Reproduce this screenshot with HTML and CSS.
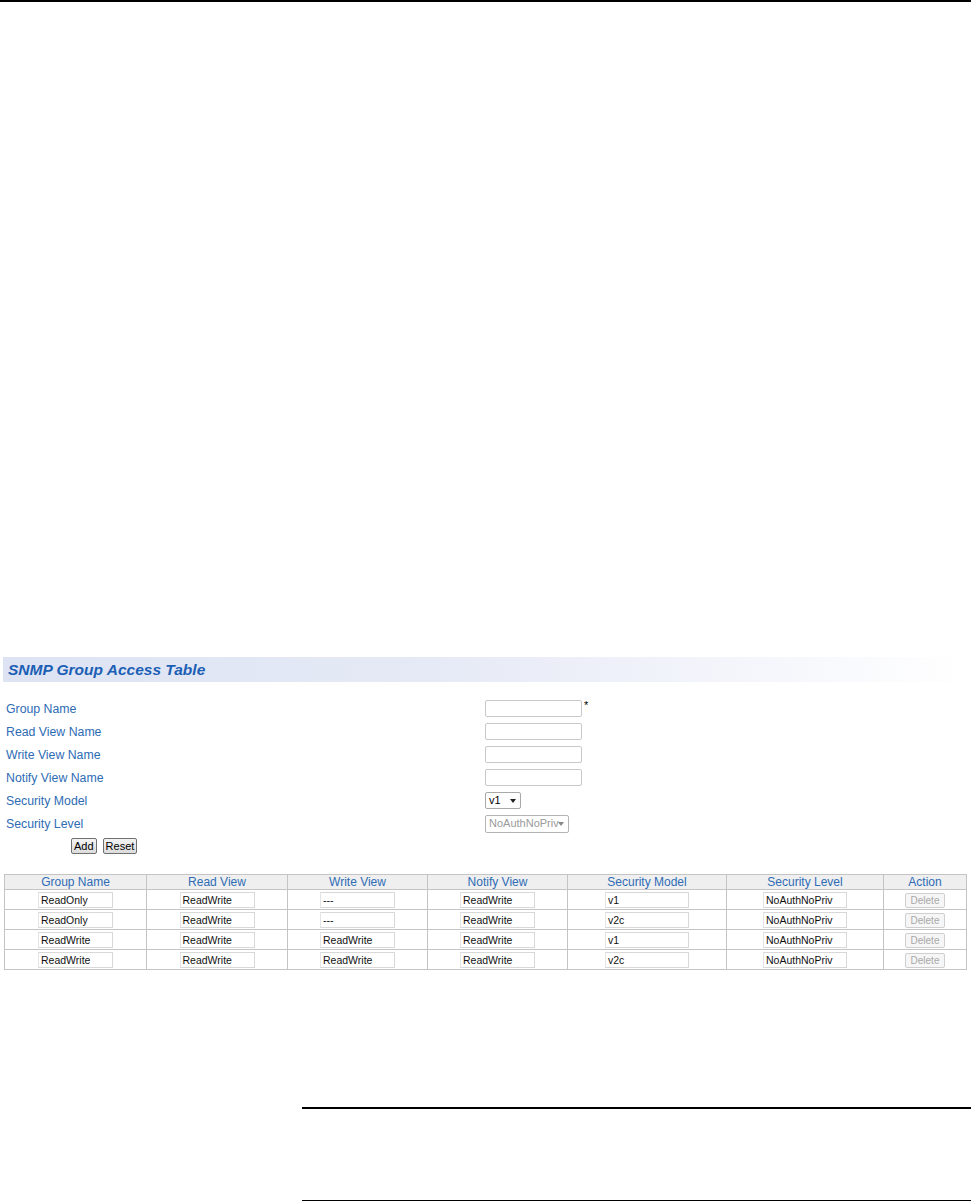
FILE: index.html
```html
<!DOCTYPE html>
<html lang="en">
<head>
    <meta charset="UTF-8">
    <title>SNMP Group Access Table</title>
    <link rel="stylesheet" href="styles.css">
</head>
<body>
    <div class="top-rule"></div>

    <div class="panel">
        <div class="panel-title">SNMP Group Access Table</div>

        <form class="entry-form">
            <div class="form-row">
                <label>Group Name</label>
                <div class="field"><input type="text" class="text-in"><span class="req">*</span></div>
            </div>
            <div class="form-row">
                <label>Read View Name</label>
                <div class="field"><input type="text" class="text-in"></div>
            </div>
            <div class="form-row">
                <label>Write View Name</label>
                <div class="field"><input type="text" class="text-in"></div>
            </div>
            <div class="form-row">
                <label>Notify View Name</label>
                <div class="field"><input type="text" class="text-in"></div>
            </div>
            <div class="form-row">
                <label>Security Model</label>
                <div class="field">
                    <div class="fake-select model-select">v1<span class="arrow"></span></div>
                </div>
            </div>
            <div class="form-row">
                <label>Security Level</label>
                <div class="field">
                    <div class="fake-select level-select disabled">NoAuthNoPriv<span class="arrow"></span></div>
                </div>
            </div>
            <div class="btn-row">
                <button type="button" class="btn">Add</button>
                <button type="button" class="btn">Reset</button>
            </div>
        </form>

        <table class="group-table">
            <thead>
                <tr>
                    <th class="c1">Group Name</th>
                    <th class="c2">Read View</th>
                    <th class="c3">Write View</th>
                    <th class="c4">Notify View</th>
                    <th class="c5">Security Model</th>
                    <th class="c6">Security Level</th>
                    <th class="c7">Action</th>
                </tr>
            </thead>
            <tbody>
                <tr>
                    <td><span class="cell-in">ReadOnly</span></td>
                    <td><span class="cell-in">ReadWrite</span></td>
                    <td><span class="cell-in dim">---</span></td>
                    <td><span class="cell-in">ReadWrite</span></td>
                    <td><span class="cell-in wide">v1</span></td>
                    <td><span class="cell-in wide">NoAuthNoPriv</span></td>
                    <td><span class="del-btn">Delete</span></td>
                </tr>
                <tr>
                    <td><span class="cell-in">ReadOnly</span></td>
                    <td><span class="cell-in">ReadWrite</span></td>
                    <td><span class="cell-in">---</span></td>
                    <td><span class="cell-in">ReadWrite</span></td>
                    <td><span class="cell-in wide">v2c</span></td>
                    <td><span class="cell-in wide">NoAuthNoPriv</span></td>
                    <td><span class="del-btn">Delete</span></td>
                </tr>
                <tr>
                    <td><span class="cell-in">ReadWrite</span></td>
                    <td><span class="cell-in">ReadWrite</span></td>
                    <td><span class="cell-in">ReadWrite</span></td>
                    <td><span class="cell-in">ReadWrite</span></td>
                    <td><span class="cell-in wide">v1</span></td>
                    <td><span class="cell-in wide">NoAuthNoPriv</span></td>
                    <td><span class="del-btn">Delete</span></td>
                </tr>
                <tr>
                    <td><span class="cell-in">ReadWrite</span></td>
                    <td><span class="cell-in">ReadWrite</span></td>
                    <td><span class="cell-in">ReadWrite</span></td>
                    <td><span class="cell-in">ReadWrite</span></td>
                    <td><span class="cell-in wide">v2c</span></td>
                    <td><span class="cell-in wide">NoAuthNoPriv</span></td>
                    <td><span class="del-btn">Delete</span></td>
                </tr>
            </tbody>
        </table>
    </div>

    <div class="note-box"></div>
</body>
</html>
```

FILE: styles.css
```css
body {
    margin: 0;
    padding: 0;
    background-color: #ffffff;
    font-family: "Liberation Sans", Arial, sans-serif;
    color: #000;
}
.top-rule {
    height: 2px;
    background-color: #000;
}
.panel {
    margin-top: 655px;
    padding-left: 3px;
}
.panel-title {
    height: 25px;
    line-height: 25px;
    padding-left: 5px;
    background: linear-gradient(to right, #dde3f3 0%, #e6eaf6 45%, #f6f7fc 80%, #ffffff 100%);
    color: #1c5fb4;
    font-size: 15.5px;
    font-weight: bold;
    font-style: italic;
}
.entry-form {
    padding: 15px 0 0 3px;
}
.form-row {
    display: flex;
    align-items: center;
    height: 23px;
}
.form-row label {
    width: 479px;
    font-size: 12.3px;
    color: #2e6cb5;
}
.field {
    display: flex;
    align-items: flex-start;
}
.text-in {
    width: 97px;
    height: 17px;
    box-sizing: border-box;
    border: 1px solid #c8c8c8;
    border-radius: 2px;
    margin: 0;
    padding: 0;
}
.req {
    font-size: 11px;
    line-height: 10px;
    margin-left: 2px;
}
.fake-select {
    position: relative;
    height: 17px;
    box-sizing: border-box;
    border: 1px solid #a9a9a9;
    border-radius: 2px;
    font-size: 11px;
    line-height: 15px;
    padding-left: 3px;
}
.model-select {
    width: 36px;
}
.level-select {
    width: 84px;
    height: 18px;
}
.fake-select.disabled {
    color: #9a9a9a;
    border-color: #b4b4b4;
}
.arrow {
    position: absolute;
    right: 4px;
    top: 6px;
    border-left: 3px solid transparent;
    border-right: 3px solid transparent;
    border-top: 4px solid #222;
}
.disabled .arrow {
    border-top-color: #888;
}
.btn-row {
    padding: 3px 0 0 65px;
    display: flex;
    gap: 6px;
}
.btn {
    font-family: "Liberation Sans", Arial, sans-serif;
    font-size: 11px;
    height: 16px;
    padding: 0 2px;
    margin: 0;
    border: 1px solid #707070;
    border-radius: 2px;
    background: linear-gradient(#f4f4f4, #dcdcdc);
    line-height: 13px;
}
.group-table {
    margin: 20px 0 0 1px;
    width: 963px;
    border-collapse: collapse;
    border: 1px solid #b8b8b8;
    table-layout: fixed;
}
.group-table th,
.group-table td {
    border: 1px solid #c4c4c4;
    text-align: center;
    padding: 0;
}
.group-table th {
    background-color: #efefef;
    color: #2e6cb5;
    font-weight: normal;
    font-size: 12px;
    height: 14px;
    line-height: 14px;
}
.group-table td {
    height: 19px;
}
.c1 { width: 141px; }
.c2 { width: 140px; }
.c3 { width: 139px; }
.c4 { width: 139px; }
.c5 { width: 158px; }
.c6 { width: 156px; }
.cell-in {
    display: inline-block;
    width: 75px;
    height: 16px;
    box-sizing: border-box;
    border: 1px solid #d8d8d8;
    border-left-color: #e4e4e4;
    font-size: 10.5px;
    line-height: 14px;
    text-align: left;
    padding-left: 2px;
    vertical-align: middle;
    color: #111;
}
.cell-in.wide {
    width: 84px;
}
.del-btn {
    display: inline-block;
    width: 40px;
    height: 15px;
    box-sizing: border-box;
    border: 1px solid #cfcfcf;
    border-radius: 2px;
    background-color: #f6f6f6;
    color: #a8a8a8;
    font-size: 10px;
    line-height: 13px;
    vertical-align: middle;
}
.note-box {
    margin: 137px 0 0 302px;
    height: 91px;
    border-top: 2px solid #000;
    border-bottom: 2px solid #000;
}
```
